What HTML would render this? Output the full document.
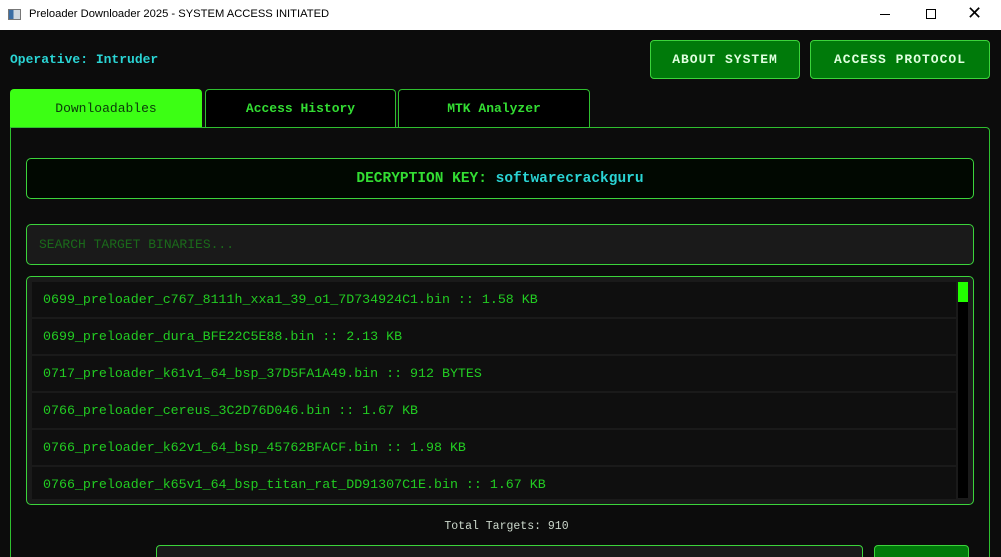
<!DOCTYPE html><html><head><style>
*{margin:0;padding:0;box-sizing:border-box}
html,body{width:1001px;height:557px;overflow:hidden}
body{background:#0c0c0c;font-family:"Liberation Mono",monospace;position:relative}
.a{position:absolute}
.tb{left:0;top:0;width:1001px;height:30px;background:#fff;font-family:"Liberation Sans",sans-serif;font-size:11.2px;color:#000}
.btn{background:#007a0a;border:1px solid #3bd43b;border-radius:4px;color:#dfffdf;font-weight:bold;font-size:13px;letter-spacing:1px;display:flex;align-items:center;justify-content:center}
.tab{top:89px;height:38px;border:1px solid #2fbf2f;border-bottom:none;border-radius:4px 4px 0 0;background:#000;color:#33dd33;font-size:13px;font-weight:bold;display:flex;align-items:center;justify-content:center}
.row{left:32px;width:924px;height:35px;background:#0f0f0f;color:#22cc22;font-size:13.3px;padding-left:11px;line-height:35px}
</style></head><body>
<div class="a tb">
<div class="a" style="left:8px;top:9px;width:13px;height:11px;border:1px solid #777;background:linear-gradient(90deg,#3a6ea5 40%,#cfd8e0 40%)"></div>
<div class="a" style="left:29px;top:8px">Preloader Downloader 2025 - SYSTEM ACCESS INITIATED</div>
<div class="a" style="left:880px;top:14px;width:10px;height:1px;background:#000"></div>
<div class="a" style="left:926px;top:9px;width:10px;height:10px;border:1px solid #000"></div>
<div class="a" style="left:967px;top:3px;font-size:18px">✕</div>
</div>
<div class="a" style="left:10px;top:52px;color:#2ad4d4;font-size:13px;font-weight:bold">Operative: Intruder</div>
<div class="a btn" style="left:650px;top:40px;width:150px;height:39px">ABOUT SYSTEM</div>
<div class="a btn" style="left:810px;top:40px;width:180px;height:39px">ACCESS PROTOCOL</div>
<div class="a tab" style="left:10px;width:192px;background:#3cff14;color:#0a3a0a;border-color:#3cff14;font-weight:normal">Downloadables</div>
<div class="a tab" style="left:205px;width:191px">Access History</div>
<div class="a tab" style="left:398px;width:192px">MTK Analyzer</div>
<div class="a" style="left:10px;top:127px;width:980px;height:440px;border:1px solid #2fbf2f;border-radius:0 4px 0 0"></div>
<div class="a" style="left:26px;top:158px;width:948px;height:41px;border:1px solid #3bd43b;border-radius:5px;background:#010801;display:flex;align-items:center;justify-content:center;font-size:14.5px;font-weight:bold;color:#33dd33">DECRYPTION KEY:&nbsp;<span style="color:#2ad4d4">softwarecrackguru</span></div>
<div class="a" style="left:26px;top:224px;width:948px;height:41px;border:1px solid #3bd43b;border-radius:5px;background:#1a1a1a;color:#1a6a1a;font-size:13px;padding-left:12px;line-height:39px">SEARCH TARGET BINARIES...</div>
<div class="a" style="left:26px;top:276px;width:948px;height:229px;border:1px solid #3bd43b;border-radius:5px;background:#1a1a1a;overflow:hidden"></div>
<div class="a row" style="top:282px">0699_preloader_c767_8111h_xxa1_39_o1_7D734924C1.bin :: 1.58 KB</div>
<div class="a row" style="top:319px">0699_preloader_dura_BFE22C5E88.bin :: 2.13 KB</div>
<div class="a row" style="top:356px">0717_preloader_k61v1_64_bsp_37D5FA1A49.bin :: 912 BYTES</div>
<div class="a row" style="top:393px">0766_preloader_cereus_3C2D76D046.bin :: 1.67 KB</div>
<div class="a row" style="top:430px">0766_preloader_k62v1_64_bsp_45762BFACF.bin :: 1.98 KB</div>
<div class="a row" style="top:467px;height:32px;line-height:35px">0766_preloader_k65v1_64_bsp_titan_rat_DD91307C1E.bin :: 1.67 KB</div>
<div class="a" style="left:958px;top:282px;width:10px;height:216px;background:#000"></div>
<div class="a" style="left:958px;top:282px;width:10px;height:20px;background:#22ff00"></div>
<div class="a" style="left:0;width:1001px;top:520px;text-align:center;color:#ccd8cc;font-size:11.5px;padding-left:12px">Total Targets: 910</div>
<div class="a" style="left:156px;top:545px;width:707px;height:20px;border:1px solid #3bd43b;border-radius:4px;background:#1a1a1a"></div>
<div class="a" style="left:874px;top:545px;width:95px;height:20px;border:1px solid #3bd43b;border-radius:4px;background:#007a0a"></div>
</body></html>
